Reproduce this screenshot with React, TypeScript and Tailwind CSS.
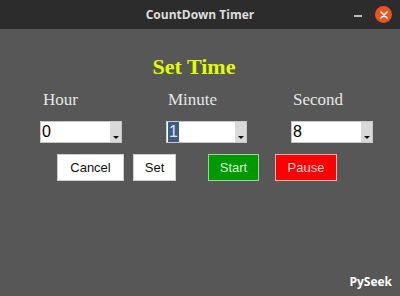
import React from "react";

function SpinBox({ value, selected, width }: { value: string; selected?: boolean; width: string }) {
  return (
    <div className={`${width} h-[22px] flex bg-white border border-[#c8c8c8]`}>
      <div className="flex-1 flex items-center pl-[1px]">
        {selected ? (
          <span className="bg-[#3d5a88] text-[#dfe6f2] leading-[20px] px-[1px] text-[16px]" style={{ fontFamily: '"Liberation Sans", sans-serif' }}>
            {value}
          </span>
        ) : (
          <span className="text-black leading-[20px] text-[16px]" style={{ fontFamily: '"Liberation Sans", sans-serif' }}>
            {value}
          </span>
        )}
      </div>
      <div className="w-[11px] bg-[#d9d9d9] flex items-end justify-center pb-[3px]">
        <svg width="6" height="3" viewBox="0 0 6 3">
          <polygon points="0,0 6,0 3,3" fill="#111" />
        </svg>
      </div>
    </div>
  );
}

export default function App() {
  const serif = { fontFamily: '"Liberation Serif", serif' };
  const sans = { fontFamily: '"Liberation Sans", Arial, sans-serif' };
  return (
    <div className="w-[400px] h-[296px] flex flex-col overflow-hidden">
      <div className="h-[29px] bg-[#2c2c2c] flex items-center relative">
        <div
          className="flex-1 text-center text-[12px] font-bold text-[#dedede]"
          style={{ fontFamily: '"Open Sans", "DejaVu Sans", sans-serif' }}
        >
          CountDown Timer
        </div>
        <div className="absolute right-[38px] top-[15px] w-[8px] h-[2px] bg-[#bdbdbd]" />
        <div className="absolute right-[8px] top-[6px] w-[17px] h-[17px] rounded-full bg-[#e95420] flex items-center justify-center">
          <svg width="8" height="8" viewBox="0 0 8 8">
            <path d="M1 1 L7 7 M7 1 L1 7" stroke="#fff" strokeWidth="1.6" strokeLinecap="round" />
          </svg>
        </div>
      </div>
      <div className="flex-1 bg-[#575757] relative flex flex-col">
        <div className="mt-[26px] h-[24px] flex items-center justify-center pr-[12px]">
          <span className="text-[22px] font-bold text-[#e2ff00] leading-[24px]" style={serif}>
            Set Time
          </span>
        </div>
        <div className="mt-[11px] ml-[43px] flex text-[17px] text-[#e6e6e6] leading-[20px]" style={serif}>
          <div className="w-[125px]">Hour</div>
          <div className="w-[125px]">Minute</div>
          <div>Second</div>
        </div>
        <div className="mt-[11px] ml-[40px] flex gap-[44px]">
          <SpinBox value="0" width="w-[82px]" />
          <SpinBox value="1" width="w-[81px]" selected />
          <SpinBox value="8" width="w-[82px]" />
        </div>
        <div className="mt-[11px] ml-[57px] flex text-[13px] leading-none" style={sans}>
          <div className="w-[67px] h-[27px] bg-white border border-[#cfcfcf] flex items-center justify-center text-[#111]">
            Cancel
          </div>
          <div className="ml-[9px] w-[43px] h-[27px] bg-white border border-[#cfcfcf] flex items-center justify-center text-[#111]">
            Set
          </div>
          <div className="ml-[32px] w-[51px] h-[27px] bg-[#009a00] border border-[#9bd49b] flex items-center justify-center text-[#d8f5d8]">
            Start
          </div>
          <div className="ml-[16px] w-[62px] h-[27px] bg-[#ff0000] border border-[#f4b0b0] flex items-center justify-center text-[#ffd4d4]">
            Pause
          </div>
        </div>
        <div
          className="absolute right-[8px] bottom-[5px] text-[12px] font-bold text-white"
          style={{ fontFamily: '"Open Sans", "DejaVu Sans", sans-serif' }}
        >
          PySeek
        </div>
      </div>
    </div>
  );
}
